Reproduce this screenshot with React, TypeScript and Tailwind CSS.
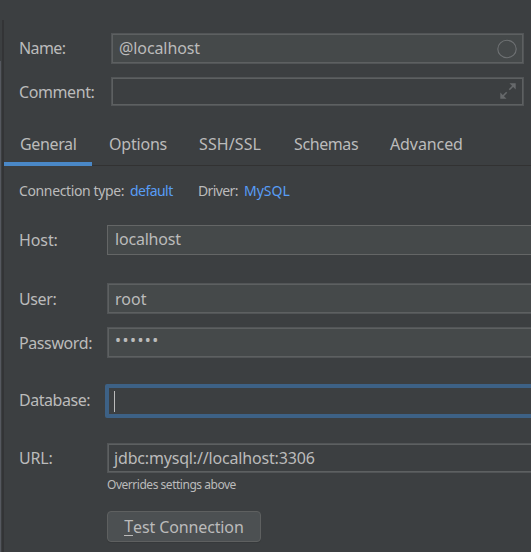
import React from "react";

const label = "relative -top-px w-[92px] shrink-0 whitespace-nowrap";
const field = "flex shrink-0 items-center border border-[#525557] shadow-[inset_0_0_0_1px_#5d6061]";

function Expand() {
  return (
    <svg width="16" height="16" viewBox="0 0 16 16" className="mb-[2px] text-[#66696b]">
      <path d="M9.5 0.3H15.7V6.5ZM0.3 9.5V15.7H6.5Z" fill="currentColor" />
      <path d="M9.3 6.7L13.5 2.5M6.7 9.3L2.5 13.5" stroke="currentColor" strokeWidth="1.6" />
    </svg>
  );
}

export default function App() {
  return (
    <div className="flex h-[552px] w-[531px] overflow-hidden bg-[#3c3f41] font-['Noto_Sans','Open_Sans',sans-serif] text-[16px] leading-[20px] text-[#bbbbbb]">
      <div className="flex w-[4px] shrink-0 pt-[20px]">
        <div className="mt-[41px] w-[1px] bg-[#55585f]" />
        <div className="w-[1px] bg-[#3c3f41]" />
        <div className="w-[2px] bg-[#333436]" />
      </div>
      <div className="flex w-[527px] shrink-0 flex-col">
        <div className="mt-[33px] flex h-[31px] items-center pl-[15px]">
          <div className={label + " tracking-[-0.6px]"}>Name:</div>
          <div className={field + " h-[31px] w-[413px] justify-between bg-[#45494a] pr-[6px] pl-[7px]"}>
            <span className="relative -top-px tracking-[-0.1px]">@localhost</span>
            <svg width="20" height="20" viewBox="0 0 20 20">
              <ellipse cx="10" cy="10" rx="9.2" ry="8.7" fill="none" stroke="#6e7173" strokeWidth="1.1" />
            </svg>
          </div>
        </div>
        <div className="mt-[13px] flex h-[29px] items-center pl-[15px]">
          <div className={label + " top-0! tracking-[-0.4px]"}>Comment:</div>
          <div className={field + " h-[29px] w-[413px] justify-end pr-[7px]"}>
            <Expand />
          </div>
        </div>
        <div className="mt-[14px] flex h-[46px] border-b border-[#323232] pt-[14px]">
          <div className="w-[105px] pl-[16px] tracking-[-0.35px]">General</div>
          <div className="w-[90px] tracking-[-0.2px]">Options</div>
          <div className="w-[95px] tracking-[0.1px]">SSH/SSL</div>
          <div className="w-[96px] tracking-[-0.4px]">Schemas</div>
          <div className="tracking-[-0.1px]">Advanced</div>
        </div>
        <div className="-mt-[4px] h-[4px] w-[88px] bg-[#4a88c7]" />
        <div className="mt-[15px] flex h-[20px] pl-[15px] text-[14px] whitespace-nowrap">
          <span className="w-[111px] tracking-[-0.37px]">Connection type:</span>
          <span className="w-[68px] tracking-[-0.55px] text-[#589df6]">default</span>
          <span className="w-[46px] tracking-[-0.6px]">Driver:</span>
          <span className="text-[#589df6]">MySQL</span>
        </div>
        <div className="mt-[24px] flex h-[30px] items-center pl-[15px]">
          <div className={label + " top-0! -mr-[4px] tracking-[-0.1px]"}>Host:</div>
          <div className="flex h-[30px] w-[440px] shrink-0 items-center border border-[#646666] bg-[#45494a] pl-[7px]">
            <span className="relative -top-px tracking-[-0.2px]">localhost</span>
          </div>
        </div>
        <div className="mt-[28px] flex h-[31px] items-center pl-[15px]">
          <div className={label + " top-0! -mr-[4px] tracking-[-0.4px]"}>User:</div>
          <div className={field + " h-[31px] w-[440px] bg-[#45494a] pl-[7px]"}>root</div>
        </div>
        <div className="mt-[13px] flex h-[31px] items-center pl-[15px]">
          <div className={label + " top-0! -mr-[4px] tracking-[-0.4px]"}>Password:</div>
          <div className={field + " h-[31px] w-[440px] bg-[#45494a] pl-[7px]"}>
            <span className="relative -top-[3px] tracking-[1.45px]">••••••</span>
          </div>
        </div>
        <div className="mt-[26px] flex h-[34px] items-center pl-[15px]">
          <div className={label + " -mr-[6px] tracking-[-0.45px]"}>Database:</div>
          <div className="flex h-[34px] w-[440px] shrink-0 items-center rounded-[2px] border-4 border-[#3d6185] pl-[5px]">
            <div className="h-[21px] w-px bg-[#bbbbbb]" />
          </div>
        </div>
        <div className="mt-[25px] flex h-[30px] items-center pl-[15px]">
          <div className={label + " top-0! -mr-[4px] tracking-[-0.2px]"}>URL:</div>
          <div className={field + " h-[30px] w-[440px] pl-[6px]"}>
            <span className="tracking-[-0.17px]">jdbc:mysql://localhost:3306</span>
          </div>
        </div>
        <div className="mt-[4px] ml-[103px] h-[16px] text-[12px] leading-[16px] tracking-[-0.47px]">Overrides settings above</div>
        <button className="mt-[18px] ml-[103px] flex h-[31px] w-[154px] items-center justify-center rounded-[4px] border border-[#5e6060] bg-[#4c5052] whitespace-nowrap tracking-[-0.13px] shadow-[0_1px_0_#36393b]">
          <span className="border-b border-[#bbbbbb] leading-[17px]">T</span>est Connection
        </button>
      </div>
    </div>
  );
}
